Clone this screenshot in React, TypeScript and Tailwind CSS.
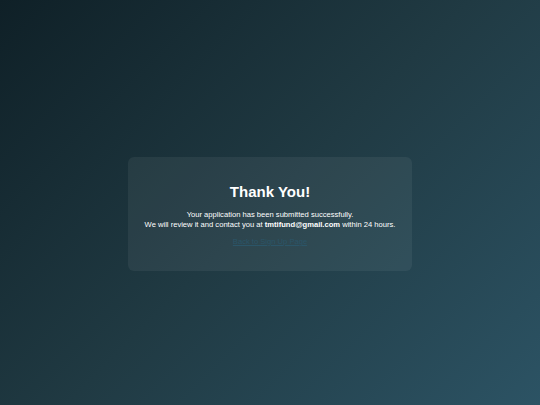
export default function App() {
  return (
    <div className="w-full h-[405px] pt-[23px] bg-[linear-gradient(135deg,#0f2027,#203a43,#2c5364)] flex items-center justify-center font-['Liberation_Sans',Arial,sans-serif]">
      <div className="w-[284px] rounded-md bg-white/[0.06] text-center text-white pt-[27px] pb-[24px]">
        <h1 className="text-[15px] font-bold leading-4 mb-[10px]">Thank You!</h1>
        <p className="text-[7.6px] leading-[10px] whitespace-nowrap">
          Your application has been submitted successfully.
          <br />
          We will review it and contact you at <strong>tmtifund@gmail.com</strong> within 24 hours.
        </p>
        <a href="#" className="block mt-[7px] text-[7.6px] leading-[10px] text-[#2b5568] underline">
          Back to Sign Up Page
        </a>
      </div>
    </div>
  );
}
